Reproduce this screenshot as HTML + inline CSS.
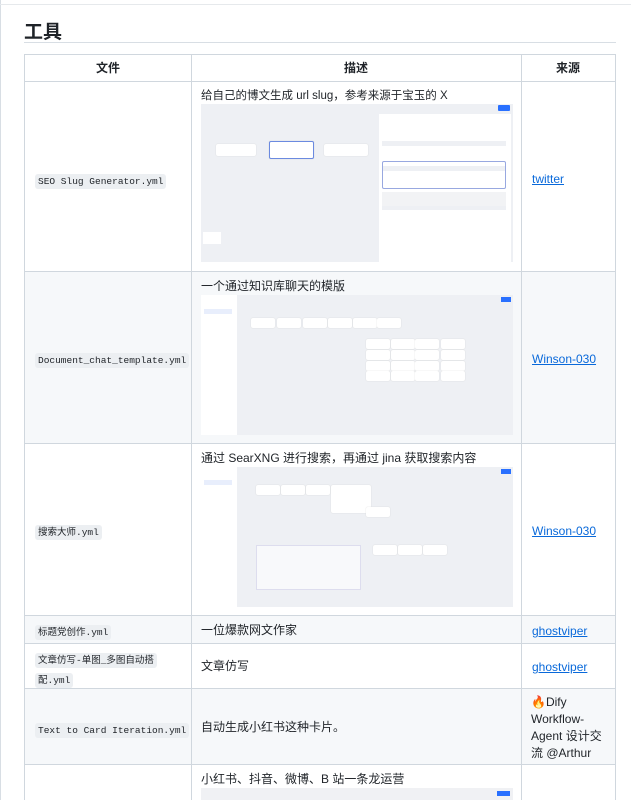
<!DOCTYPE html>
<html><head><meta charset="utf-8"><style>
*{margin:0;padding:0;box-sizing:border-box}
body{width:631px;height:800px;overflow:hidden;background:#fff;font-family:"Liberation Sans","Noto Sans CJK SC",sans-serif;color:#1f2328;position:relative}
.a{position:absolute}
.h{left:24px;top:17px;font-size:19px;font-weight:bold}
.hl{left:24px;top:42px;width:592px;height:1px;background:#d8dee4}
.row{position:absolute;left:24px;width:592px;border-top:1px solid #d0d7de}
.g{background:#f6f8fa}
.v{position:absolute;top:54px;width:1px;height:746px;background:#d0d7de}
.code{font-family:"Liberation Mono","Noto Sans CJK SC",monospace;font-size:9.5px;background:#eceff2;border-radius:3px;padding:2px 3px;color:#1f2328}
.t{font-size:12px;line-height:14px}
a{color:#0969da;text-decoration:underline;font-size:12px}
.img{position:absolute;left:201px;width:312px;background:#eef0f4;overflow:hidden}
.n{position:absolute;background:#fff;border-radius:2px;height:10px;width:24px;box-shadow:0 0 1px #ccc}
</style></head><body>
<div class="a" style="left:0;top:0;width:1px;height:800px;background:#d8dee4"></div>
<div class="a" style="left:0;top:4px;width:631px;height:1px;background:#e6e9ec"></div>
<div class="a h">工具</div>
<div class="a hl"></div>

<div class="row" style="top:54px;height:27px"></div>
<div class="row" style="top:81px;height:190px"></div>
<div class="row g" style="top:271px;height:172px"></div>
<div class="row" style="top:443px;height:172px"></div>
<div class="row g" style="top:615px;height:28px"></div>
<div class="row" style="top:643px;height:45px"></div>
<div class="row g" style="top:688px;height:76px"></div>
<div class="row" style="top:764px;height:40px"></div>
<div class="v" style="left:24px"></div>
<div class="v" style="left:191px"></div>
<div class="v" style="left:521px"></div>
<div class="v" style="left:615px"></div>

<div class="a t" style="left:96px;top:61px;font-weight:bold">文件</div>
<div class="a t" style="left:344px;top:61px;font-weight:bold">描述</div>
<div class="a t" style="left:556px;top:61px;font-weight:bold">来源</div>

<div class="a" style="left:35px;top:171px"><span class="code">SEO Slug Generator.yml</span></div>
<div class="a t" style="left:201px;top:89px;font-size:11.5px">给自己的博文生成 url slug，参考来源于宝玉的 X</div>
<div class="img" style="top:104px;height:158px">
 <div class="a" style="left:178px;top:10px;width:132px;height:148px;background:#fff"></div>
 <div class="a" style="left:181px;top:37px;width:124px;height:5px;background:#eef0f4"></div>
 <div class="a" style="left:181px;top:62px;width:124px;height:5px;background:#eef0f4"></div>
 <div class="a" style="left:181px;top:57px;width:124px;height:28px;border:1px solid #98a8e0;border-radius:2px;top:57px"></div>
 <div class="a" style="left:181px;top:88px;width:124px;height:16px;background:#f2f3f5"></div>
 <div class="a" style="left:181px;top:102px;width:124px;height:4px;background:#eef0f4"></div>
 <div class="a" style="left:297px;top:1px;width:12px;height:6px;background:#2970ff;border-radius:1px"></div>
 <div class="n" style="left:15px;top:40px;width:40px;height:12px"></div>
 <div class="n" style="left:68px;top:37px;width:45px;height:18px;border:1px solid #6b8ae0"></div>
 <div class="n" style="left:123px;top:40px;width:44px;height:12px"></div>
 <div class="a" style="left:2px;top:128px;width:18px;height:12px;background:#fff"></div>
</div>
<div class="a" style="left:532px;top:170px"><a>twitter</a></div>

<div class="a" style="left:35px;top:350px"><span class="code">Document_chat_template.yml</span></div>
<div class="a t" style="left:201px;top:279px">一个通过知识库聊天的模版</div>
<div class="img" style="top:295px;height:140px">
 <div class="a" style="left:0;top:0;width:36px;height:140px;background:#fff"></div>
 <div class="a" style="left:3px;top:14px;width:28px;height:5px;background:#e8eefc"></div>
 <div class="a" style="left:300px;top:2px;width:10px;height:5px;background:#2970ff"></div>
 <div class="n" style="left:50px;top:23px"></div><div class="n" style="left:76px;top:23px"></div>
 <div class="n" style="left:102px;top:23px"></div><div class="n" style="left:127px;top:23px"></div>
 <div class="n" style="left:152px;top:23px"></div><div class="n" style="left:176px;top:23px"></div>
 <div class="n" style="left:165px;top:44px"></div><div class="n" style="left:190px;top:44px"></div><div class="n" style="left:214px;top:44px"></div><div class="n" style="left:240px;top:44px"></div>
 <div class="n" style="left:165px;top:55px"></div><div class="n" style="left:190px;top:55px"></div><div class="n" style="left:214px;top:55px"></div><div class="n" style="left:240px;top:55px"></div>
 <div class="n" style="left:165px;top:66px"></div><div class="n" style="left:190px;top:66px"></div><div class="n" style="left:214px;top:66px"></div><div class="n" style="left:240px;top:66px"></div>
 <div class="n" style="left:165px;top:76px"></div><div class="n" style="left:190px;top:76px"></div><div class="n" style="left:214px;top:76px"></div><div class="n" style="left:240px;top:76px"></div>
</div>
<div class="a" style="left:532px;top:350px"><a>Winson-030</a></div>

<div class="a" style="left:35px;top:522px"><span class="code">搜索大师.yml</span></div>
<div class="a t" style="left:201px;top:451px">通过 SearXNG 进行搜索，再通过 jina 获取搜索内容</div>
<div class="img" style="top:467px;height:140px">
 <div class="a" style="left:0;top:0;width:36px;height:140px;background:#fff"></div>
 <div class="a" style="left:3px;top:13px;width:28px;height:5px;background:#e8eefc"></div>
 <div class="a" style="left:300px;top:2px;width:10px;height:5px;background:#2970ff"></div>
 <div class="n" style="left:55px;top:18px"></div><div class="n" style="left:80px;top:18px"></div>
 <div class="n" style="left:105px;top:18px"></div><div class="n" style="left:130px;top:18px;width:40px;height:28px"></div>
 <div class="n" style="left:165px;top:40px"></div>
 <div class="a" style="left:55px;top:78px;width:105px;height:45px;background:#f8f9fb;border:1px solid #dde"></div>
 <div class="n" style="left:172px;top:78px"></div><div class="n" style="left:197px;top:78px"></div><div class="n" style="left:222px;top:78px"></div>
</div>
<div class="a" style="left:532px;top:522px"><a>Winson-030</a></div>

<div class="a" style="left:35px;top:622px"><span class="code">标题党创作.yml</span></div>
<div class="a t" style="left:201px;top:623px">一位爆款网文作家</div>
<div class="a" style="left:532px;top:622px"><a>ghostviper</a></div>

<div class="a" style="left:35px;top:650px;line-height:18px;width:150px"><span class="code">文章仿写-单图_多图自动搭</span><br><span class="code">配.yml</span></div>
<div class="a t" style="left:201px;top:659px">文章仿写</div>
<div class="a" style="left:532px;top:658px"><a>ghostviper</a></div>

<div class="a" style="left:35px;top:720px"><span class="code">Text to Card Iteration.yml</span></div>
<div class="a t" style="left:201px;top:720px">自动生成小红书这种卡片。</div>
<div class="a t" style="left:531px;top:694px;line-height:17px;width:80px">🔥Dify Workflow-Agent 设计交流 @Arthur</div>

<div class="a t" style="left:201px;top:772px">小红书、抖音、微博、B 站一条龙运营</div>
<div class="img" style="top:788px;height:12px;background:#f0f1f4">
 <div class="a" style="left:296px;top:3px;width:13px;height:5px;background:#2970ff"></div>
</div>
</body></html>
